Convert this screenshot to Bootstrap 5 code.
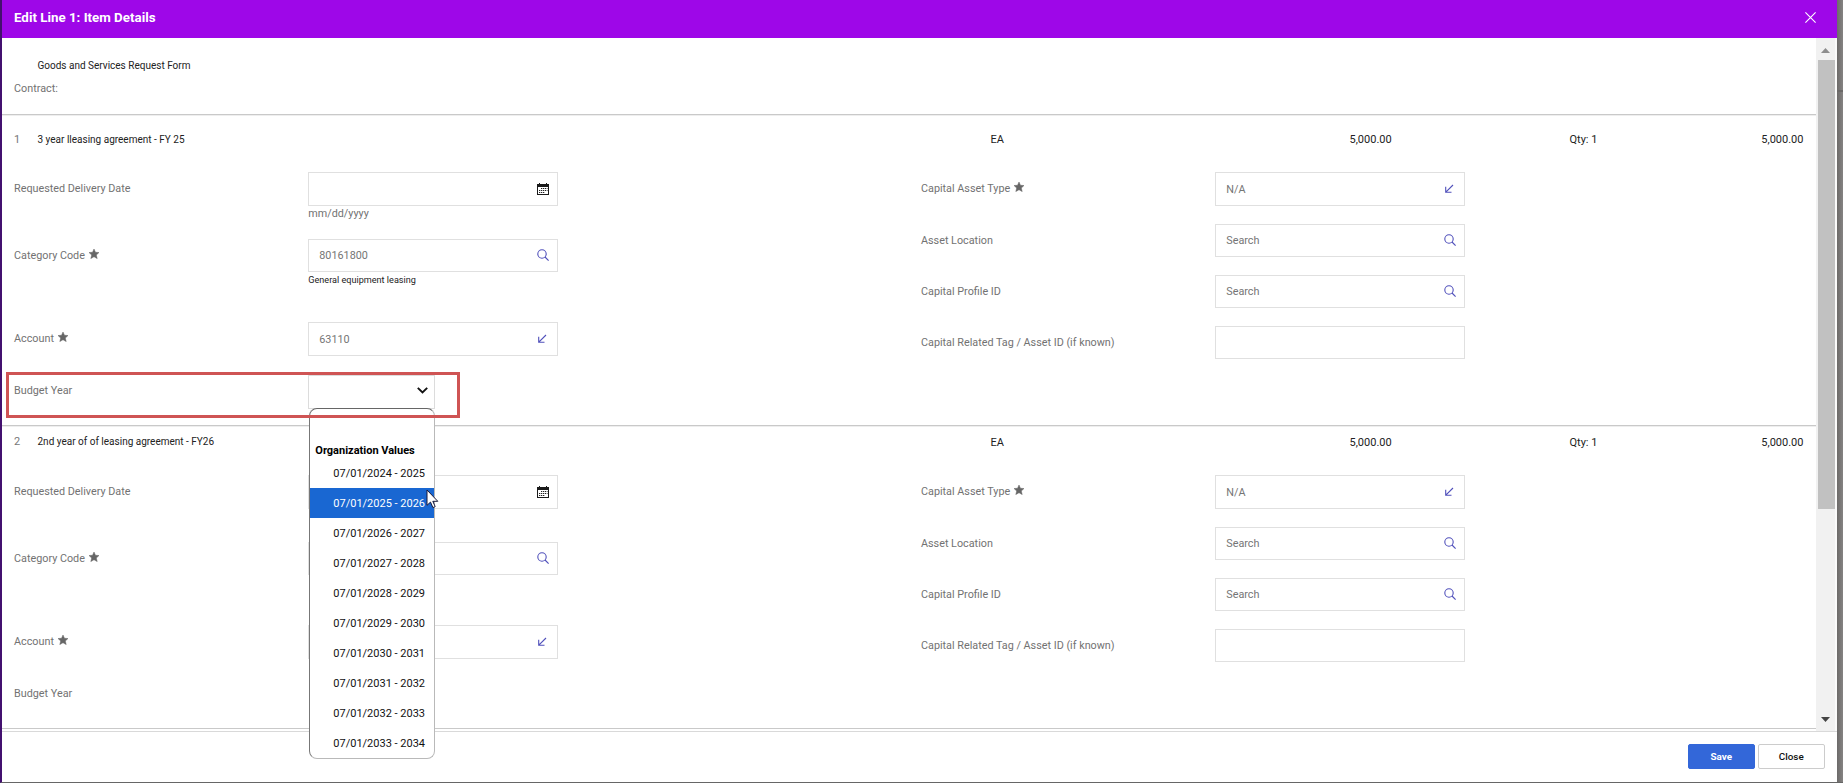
<!DOCTYPE html>
<html lang="en">
<head>
<meta charset="utf-8">
<title>Edit Line 1: Item Details</title>
<link href="https://cdn.jsdelivr.net/npm/bootstrap@5.3.0/dist/css/bootstrap.min.css" rel="stylesheet">
<style>
  body { font-family: Roboto, "Liberation Sans", sans-serif; font-size: 10.8px; line-height: 16px; color: #222; background: #7b7977; }
  .shell { height: 783px; padding-right: 6px; border-left: 2px solid #43106f; border-bottom: 1px solid #666; background: linear-gradient(#6b6968, #6b6968) right 90px / 6px 2px no-repeat, linear-gradient(90deg, #6c6a69, #858382) right / 6px 100% no-repeat; }
  .dialog-box { background: #fff; }
  .title-bar { height: 38px; background: #9e07e8; color: #fff; font-size: 13.33px; padding: 0 21px 3px 12px; }
  .body-area { height: 693px; }
  .intro { height: 76px; padding: 20px 12px 0; }
  .desc-text { font-size: 10px; }
  .intro .desc-text { padding-left: 23.5px; margin-bottom: 7px; }
  .line-item { border-top: 1px solid #c9c9c9; box-shadow: inset 0 1px #eee; padding-left: 12px; }
  .line-first { height: 311px; padding-top: 10px; }
  .line-second { height: 303px; padding-top: 2px; }
  .last-rule { border-top: 1px solid #c9c9c9; height: 3px; }
  .line-head { display: grid; grid-template-columns: 23.5px 953px 359px 220px 1fr; height: 30px; margin-bottom: 17px; padding-right: 12.5px; font-size: 11px; }
  .line-head .idx { color: #777; }
  .line-second .desc-text, .line-second .idx { position: relative; top: -1px; }
  .col-left { width: 907px; }
  .form-line { display: flex; align-items: flex-start; }
  .lbl { width: 294.3px; line-height: 33px; color: #727272; flex: none; }
  .lbl-year { line-height: 31px; }
  .lbl svg { margin: -5px 0 0 1px; }
  .box { width: 250px; height: 33.6px; border: 1px solid #e0e0e0; border-radius: 0; padding: 0 8px 0 10px; color: #757575; background: #fff; }
  .box span { padding-top: 2px; }
  .box-short { height: 32.6px; }
  .h83 { height: 83px; } .h67 { height: 67px; } .h53 { height: 53px; } .h51 { height: 51px; } .h52 { height: 52px; }
  .hint { color: #727272; line-height: 15px; }
  .hint-dark { color: #222; font-size: 9.1px; line-height: 17px; }
  .year-select { width: 126.5px; height: 34px; border: 1px solid #dcdcdc; padding: 0 5.5px 3px; }
  .options { left: .5px; top: 33px; width: 126.5px; height: 351px; background: #fff; border: 1px solid #b9b9b9; border-top-color: #666; border-left-color: #777; border-radius: 8px; z-index: 5; font-size: 11px; color: #111; padding-top: 26px; }
  .options .opt-title { height: 30px; line-height: 32px; padding-left: 5.5px; color: #000; }
  .options .opt { height: 30px; line-height: 32px; padding-left: 23.5px; white-space: nowrap; }
  .options .opt:nth-child(2) { height: 23px; line-height: 18px; }
  .options .opt.picked { background: #1967d2; color: #fff; }
  .callout-frame { left: -8px; top: -3px; width: 454px; height: 46px; border: 3px solid #cf5454; z-index: 6; }
  .pointer { left: 116px; top: 80px; z-index: 7; }
  .bar-track { width: 21px; background: #f1f1f1; border-right: 2px solid #fafafa; }
  .bar-thumb { width: 17px; height: 449px; background: #c1c1c1; margin: 6px 0 0 2px; }
  .foot { height: 51px; border-top: 1px solid #d9d9d9; padding: 12px 12.5px 0; gap: 3.5px; }
  .foot .btn { width: 66.5px; height: 25px; font-size: 9.9px; line-height: 21px; padding: 0; border-radius: 2px; }
  .btn-save { background: #3367d9; color: #fff; border-color: #3367d9; }
  .btn-shut { background: #fff; color: #111; border-color: #ccc; font-weight: 500; }
</style>
</head>
<body>
<svg width="0" height="0" class="position-absolute">
  <symbol id="i-star" viewBox="0 0 20 20"><path fill="#666" stroke="#666" d="M10 0l2.9 6.5 7.1.6-5.4 4.9 1.8 7.2-6.4-3.8-6.4 3.8L5.400 12 0 7.100l7.100-.6z"/></symbol>
  <symbol id="i-search" viewBox="0 0 12 12"><g fill="none" stroke="#5050bb" stroke-width="1.1"><circle cx="5" cy="5" r="4.2"/><path d="M8 8l3.600 3.600"/></g></symbol>
  <symbol id="i-arrow" viewBox="0 0 12 12"><path fill="none" stroke="#5050bb" stroke-width="1.100" d="M9 2L1.800 9.200M1.700 3.700v5.600h5.800"/></symbol>
  <symbol id="i-cal" viewBox="0 0 12 12"><path fill="#1a1a1a" fill-rule="evenodd" d="M0 1h2V0h1v1h6V0h1v1h2v11H0zM1 4v7h10V4z"/><path stroke="#222" stroke-width="1.200" stroke-dasharray="1.300 .7" d="M4 5.500h6.500M2 7.500h8.500M2 9.500h5.500"/></symbol>
</svg>

<div class="shell overflow-hidden">
  <div class="dialog-box">
    <div class="title-bar d-flex align-items-center justify-content-between fw-bold">
      <span>Edit Line 1: Item Details</span>
      <svg width="11" height="11" viewBox="0 0 11 11"><path stroke="#fff" stroke-width="1.1" d="M.4.4l10.2 10.2M10.6.4L.4 10.6"/></svg>
    </div>

    <div class="body-area d-flex">
      <div class="flex-grow-1">
        <div class="intro">
          <div class="desc-text">Goods and Services Request Form</div>
          <div class="hint">Contract:</div>
        </div>

        <section class="line-item line-first">
          <div class="line-head align-items-center">
            <span class="idx">1</span><span class="desc-text">3 year lleasing agreement - FY 25</span>
            <span>EA</span><span>5,000.00</span><span class="d-flex justify-content-between"><span>Qty: 1</span><span>5,000.00</span></span>
          </div>
          <div class="d-flex">
            <div class="col-left">
              <div class="form-line h67"><div class="lbl">Requested Delivery Date</div>
                <div><div class="box d-flex align-items-center justify-content-end"><svg width="12" height="12"><use href="#i-cal"/></svg></div><div class="hint">mm/dd/yyyy</div></div></div>
              <div class="form-line h83"><div class="lbl">Category Code <svg width="10" height="10"><use href="#i-star"/></svg></div>
                <div><div class="box box-short d-flex align-items-center justify-content-between"><span>80161800</span><svg width="12" height="12"><use href="#i-search"/></svg></div><div class="hint-dark">General equipment leasing</div></div></div>
              <div class="form-line h53"><div class="lbl">Account <svg width="10" height="10"><use href="#i-star"/></svg></div>
                <div class="box d-flex align-items-center justify-content-between"><span>63110</span><svg width="12" height="12"><use href="#i-arrow"/></svg></div></div>
              <div class="form-line position-relative"><div class="lbl lbl-year">Budget Year</div>
                <div class="position-relative">
                  <div class="year-select d-flex align-items-center justify-content-end"><svg width="11" height="7" viewBox="0 0 11 7"><path fill="none" stroke="#111" stroke-width="1.9" d="M.8 .9l4.7 4.6L10.2.9"/></svg></div>
                  <div class="options position-absolute">
                    <div class="opt-title fw-bold">Organization Values</div>
                    <div class="opt">07/01/2024 - 2025</div>
                    <div class="opt picked">07/01/2025 - 2026</div>
                    <div class="opt">07/01/2026 - 2027</div>
                    <div class="opt">07/01/2027 - 2028</div>
                    <div class="opt">07/01/2028 - 2029</div>
                    <div class="opt">07/01/2029 - 2030</div>
                    <div class="opt">07/01/2030 - 2031</div>
                    <div class="opt">07/01/2031 - 2032</div>
                    <div class="opt">07/01/2032 - 2033</div>
                    <div class="opt">07/01/2033 - 2034</div>
                    <svg class="pointer position-absolute" width="13" height="20" viewBox="0 0 13 20"><path fill="#fff" stroke="#1b1b3a" d="M1 1v15.3l3.5-3.2 2.4 5.5 2.3-1-2.400-5.300h5z"/></svg>
                  </div>
                </div>
                <div class="callout-frame position-absolute"></div>
              </div>
            </div>
            <div>
              <div class="form-line h52"><div class="lbl">Capital Asset Type <svg width="10" height="10"><use href="#i-star"/></svg></div><div class="box d-flex align-items-center justify-content-between"><span>N/A</span><svg width="12" height="12"><use href="#i-arrow"/></svg></div></div>
              <div class="form-line h51"><div class="lbl">Asset Location</div><div class="box box-short d-flex align-items-center justify-content-between"><span>Search</span><svg width="12" height="12"><use href="#i-search"/></svg></div></div>
              <div class="form-line h51"><div class="lbl">Capital Profile ID</div><div class="box box-short d-flex align-items-center justify-content-between"><span>Search</span><svg width="12" height="12"><use href="#i-search"/></svg></div></div>
              <div class="form-line"><div class="lbl">Capital Related Tag / Asset ID (if known)</div><div class="box box-short"></div></div>
            </div>
          </div>
        </section>

        <section class="line-item line-second">
          <div class="line-head align-items-center">
            <span class="idx">2</span><span class="desc-text">2nd year of of leasing agreement - FY26</span>
            <span>EA</span><span>5,000.00</span><span class="d-flex justify-content-between"><span>Qty: 1</span><span>5,000.00</span></span>
          </div>
          <div class="d-flex">
            <div class="col-left">
              <div class="form-line h67"><div class="lbl">Requested Delivery Date</div>
                <div class="box d-flex align-items-center justify-content-end"><svg width="12" height="12"><use href="#i-cal"/></svg></div></div>
              <div class="form-line h83"><div class="lbl">Category Code <svg width="10" height="10"><use href="#i-star"/></svg></div>
                <div class="box box-short d-flex align-items-center justify-content-end"><svg width="12" height="12"><use href="#i-search"/></svg></div></div>
              <div class="form-line h53"><div class="lbl">Account <svg width="10" height="10"><use href="#i-star"/></svg></div>
                <div class="box d-flex align-items-center justify-content-end"><svg width="12" height="12"><use href="#i-arrow"/></svg></div></div>
              <div class="form-line"><div class="lbl lbl-year">Budget Year</div></div>
            </div>
            <div>
              <div class="form-line h52"><div class="lbl">Capital Asset Type <svg width="10" height="10"><use href="#i-star"/></svg></div><div class="box d-flex align-items-center justify-content-between"><span>N/A</span><svg width="12" height="12"><use href="#i-arrow"/></svg></div></div>
              <div class="form-line h51"><div class="lbl">Asset Location</div><div class="box box-short d-flex align-items-center justify-content-between"><span>Search</span><svg width="12" height="12"><use href="#i-search"/></svg></div></div>
              <div class="form-line h51"><div class="lbl">Capital Profile ID</div><div class="box box-short d-flex align-items-center justify-content-between"><span>Search</span><svg width="12" height="12"><use href="#i-search"/></svg></div></div>
              <div class="form-line"><div class="lbl">Capital Related Tag / Asset ID (if known)</div><div class="box box-short"></div></div>
            </div>
          </div>
        </section>
        <div class="last-rule"></div>
      </div>

      <div class="bar-track d-flex flex-column justify-content-between">
        <div>
          <svg class="d-block mx-auto" width="9" height="16" viewBox="0 0 9 16"><path fill="#8d8d8d" d="M0 15l4.500-5L9 15z"/></svg>
          <div class="bar-thumb"></div>
        </div>
        <svg class="d-block mx-auto" width="9" height="15" viewBox="0 0 9 15"><path fill="#444" d="M0 1h9L4.500 6z"/></svg>
      </div>
    </div>

    <div class="foot d-flex justify-content-end">
      <button class="btn btn-save fw-bold">Save</button>
      <button class="btn btn-shut">Close</button>
    </div>
  </div>
</div>
<script src="https://cdn.jsdelivr.net/npm/bootstrap@5.3.0/dist/js/bootstrap.bundle.min.js"></script>
</body>
</html>
